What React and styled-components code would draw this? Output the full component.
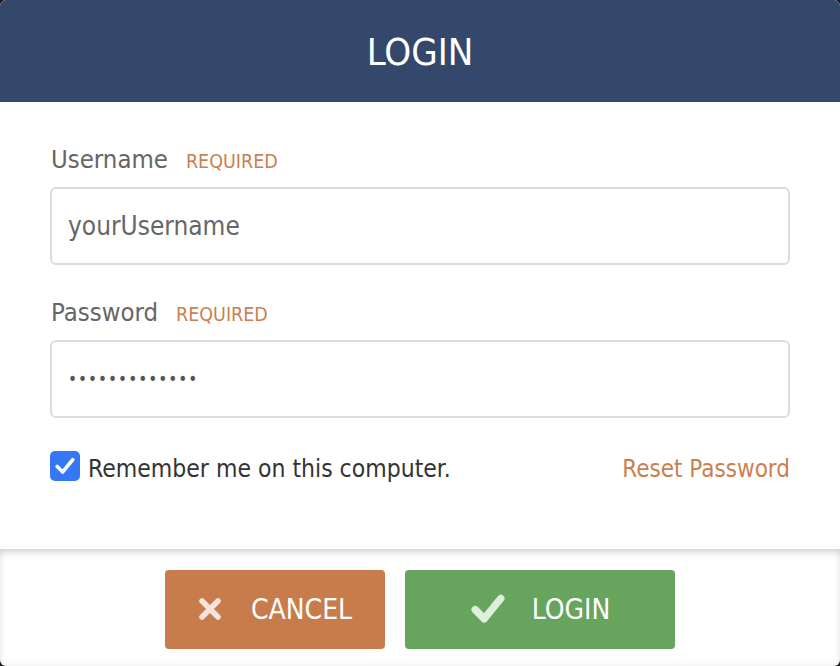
import styled, { createGlobalStyle } from "styled-components";

const GlobalStyle = createGlobalStyle`
    html, body {
        margin: 0;
        padding: 0;
        background: #1c1c1c;
    }
    * {
        box-sizing: border-box;
    }
`

const FONT = `"DejaVu Sans Condensed", "Liberation Sans Narrow", "Liberation Sans", sans-serif`

const Dialog = styled.div`
    width: 840px;
    height: 666px;
    display: flex;
    flex-direction: column;
    background-color: white;
    border-radius: 6px;
    overflow: hidden;
    font-family: ${FONT};
`

const Header = styled.div`
    height: 102px;
    flex-shrink: 0;
    display: flex;
    align-items: center;
    justify-content: center;
    background-color: #34486b;
    color: white;
    font-size: 38px;
    padding-top: 2px;
`

const Body = styled.div`
    flex: 1;
    padding: 39px 50px 0;
`

const Field = styled.div`
    margin-bottom: 29px;
`

const LabelRow = styled.div`
    display: flex;
    align-items: baseline;
    height: 36px;
    padding-top: 3px;
    margin-bottom: 10px;
`

const Label = styled.label`
    font-size: 25.5px;
    color: #666;
    margin-left: 1px;
`

const Required = styled.span`
    font-size: 19.5px;
    color: #cb7f4f;
    margin-left: 18px;
`

const TextInput = styled.input`
    display: block;
    width: 100%;
    height: 78px;
    border: 2px solid #dcdcdc;
    border-radius: 6px;
    padding: 0 16px;
    font-family: ${FONT};
    font-size: 26px;
    color: #666;
    outline: none;
    background: white;

    &[type="password"] {
        font-size: 17px;
        letter-spacing: 1px;
        color: #555;
    }
`

const OptionsRow = styled.div`
    display: flex;
    justify-content: space-between;
    align-items: center;
    margin-top: 31px;
`

const RememberLabel = styled.label`
    display: flex;
    align-items: center;
    gap: 8px;
    font-size: 24.5px;
    color: #333;
`

const RememberText = styled.span`
    padding-top: 5px;
`

const CheckBox = styled.span`
    width: 30px;
    height: 30px;
    border-radius: 5px;
    background-color: #3478f6;
    display: flex;
    align-items: center;
    justify-content: center;
`

const ResetLink = styled.a`
    font-size: 24px;
    color: #cb7f4f;
    text-decoration: none;
    padding-top: 5px;
`

const Footer = styled.div`
    height: 117px;
    flex-shrink: 0;
    display: flex;
    align-items: center;
    justify-content: center;
    gap: 20px;
    padding-top: 3px;
    box-shadow: inset 0 6px 8px -4px rgba(0, 0, 0, 0.18), inset 0 0 10px rgba(0, 0, 0, 0.08);
`

const Button = styled.button`
    width: ${props => props.$width}px;
    height: 79px;
    border: none;
    border-radius: 4px;
    background-color: ${props => props.$color};
    color: white;
    font-family: ${FONT};
    font-size: 28px;
    display: flex;
    align-items: center;
    justify-content: center;
    gap: ${props => props.$gap}px;
    cursor: pointer;

    svg {
        opacity: 0.8;
    }
`

const CrossIcon = () => (
    <svg width="24" height="24" viewBox="0 0 24 24">
        <path d="M4 4 L20 20 M20 4 L4 20" stroke="white" strokeWidth="5.5" strokeLinecap="round" fill="none" />
    </svg>
)

const CheckIcon = ({ size, stroke }) => (
    <svg width={size} height={size} viewBox="0 0 24 24">
        <path d="M3.5 12.5 L9.5 18.5 L20.5 5" stroke="white" strokeWidth={stroke} strokeLinecap="round" strokeLinejoin="round" fill="none" />
    </svg>
)

export default function App() {
    return (
        <>
            <GlobalStyle />
            <Dialog>
                <Header>LOGIN</Header>
                <Body>
                    <Field>
                        <LabelRow>
                            <Label>Username</Label>
                            <Required>REQUIRED</Required>
                        </LabelRow>
                        <TextInput type="text" defaultValue="yourUsername" />
                    </Field>
                    <Field>
                        <LabelRow>
                            <Label>Password</Label>
                            <Required>REQUIRED</Required>
                        </LabelRow>
                        <TextInput type="password" defaultValue="passwordpass1" />
                    </Field>
                    <OptionsRow>
                        <RememberLabel>
                            <CheckBox>
                                <CheckIcon size={22} stroke={4} />
                            </CheckBox>
                            <RememberText>Remember me on this computer.</RememberText>
                        </RememberLabel>
                        <ResetLink href="#">Reset Password</ResetLink>
                    </OptionsRow>
                </Body>
                <Footer>
                    <Button $width={220} $color="#c97c4b" $gap={29}>
                        <CrossIcon />
                        CANCEL
                    </Button>
                    <Button $width={270} $color="#67a55f" $gap={26}>
                        <CheckIcon size={36} stroke={5} />
                        LOGIN
                    </Button>
                </Footer>
            </Dialog>
        </>
    )
}
